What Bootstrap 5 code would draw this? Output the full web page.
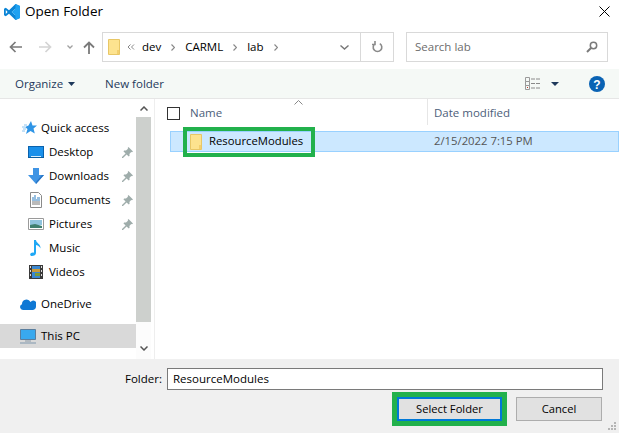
<!DOCTYPE html>
<html lang="en">

<head>
    <meta charset="UTF-8">
    <meta name="viewport" content="width=device-width, initial-scale=1.0">
    <title>Open Folder</title>
    <link href="https://cdn.jsdelivr.net/npm/bootstrap@5.3.5/dist/css/bootstrap.min.css" rel="stylesheet">
    <style>
        html, body { height: 100%; overflow: hidden; }
        body { font-family: "Open Sans", "Noto Sans", sans-serif; font-size: 11.5px; color: #000; background: #fff; }
        svg { display: block; flex: none; }
        .dialog { width: 619px; height: 433px; }
        .title-bar { height: 32px; padding: 0 9px 9px 4px; }
        .title-text { margin-left: 5px; font-size: 13.5px; }
        .tool-bar { height: 37px; padding-left: 9px; padding-bottom: 7px; }
        .nav-btns { width: 93px; padding-right: 7px; }
        .fwd-btn { margin-left: 17px; }
        .hist-btn { margin-left: 15px; }
        .address-box { width: 292px; height: 30px; border: 1px solid #d9d9d9; padding-left: 5px; }
        .crumb { margin-left: 7px; }
        .crumb-sep { margin-left: 10px; }
        .addr-drop { margin-right: 11px; }
        .refresh-cell { width: 33px; height: 100%; border-left: 1px solid #d9d9d9; }
        .search-box { width: 202px; height: 30px; margin-left: 12px; border: 1px solid #d9d9d9; padding: 0 9px 0 8px; color: #6d6d6d; }
        .command-bar { height: 30px; background: #f5f9f6; border-bottom: 1px solid #e6e6e6; color: #1e395b; padding-left: 15px; padding-right: 14px; }
        .org-caret { margin-left: 5px; }
        .new-folder { margin-left: 30px; }
        .view-caret { margin-left: 10px; }
        .help-icon { margin-left: 30px; }
        .main-pane { height: 260px; }
        .side-pane { width: 136px; padding-top: 17px; }
        .side-row { height: 24px; padding-right: 3px; }
        .side-row.lvl-1 { padding-left: 20px; }
        .side-row.lvl-2 { padding-left: 28px; }
        .side-row.gap-top { margin-top: 8px; }
        .side-row.selected { background: #d9d9d9; }
        .side-icon { width: 21px; }
        .star-icon { margin-left: 2px; }
        .scroll-track { width: 15px; margin-right: 3px; background: #fcfcfc; }
        .scroll-btn { height: 18px; background: #fff; }
        .scroll-btn.bottom { height: 37px; background: #fcfcfc; }
        .scroll-thumb { height: 205px; background: #cdd0cd; }
        .list-pane { border-left: 1px solid #eee; }
        .col-head { height: 28px; color: #4c607a; margin-bottom: 4px; }
        .head-check { width: 13px; height: 13px; border: 1px solid #333; margin: 0 10px 0 12px; }
        .name-head { width: 237px; }
        .date-head { height: 26px; border-left: 1px solid #e6e6e6; padding-left: 6px; padding-top: 1px; margin-bottom: 2px; }
        .sort-mark { position: absolute; left: 139px; top: 1px; }
        .file-row { height: 21px; margin-left: 15px; background: #cce8ff; border: 1px solid #99d1ff; }
        .name-cell { width: 263px; padding-left: 19px; }
        .name-text { margin-left: 7px; font-size: 11.3px; }
        .name-mark { position: absolute; left: 12px; top: -5px; width: 132px; height: 30px; border: 4px solid #22b14c; }
        .date-cell { color: #555; font-size: 11.3px; }
        .bottom-pane { background: #f0f0f0; padding: 9px 16px 0 0; position: relative; flex: 1; }
        .folder-label { margin-right: 5px; }
        .folder-input { width: 436px; height: 22px; border: 1px solid #7a7a7a; background: #fff; padding-left: 5px; }
        .btn-row { margin-top: 2px; }
        .dlg-btn { height: 24px; background: #e1e1e1; border: 1px solid #adadad; border-radius: 0; font-size: 11.2px; color: #000; padding: 0; }
        .select-btn { width: 105px; border: 2px solid #0078d7; }
        .select-mark { border: 5px solid #22b14c; }
        .cancel-btn { width: 86px; margin-left: 9px; margin-right: 1px; }
        .grip { position: absolute; right: 2px; bottom: 2px; }
    </style>
</head>

<body>
    <div class="dialog d-flex flex-column">
        <div class="title-bar d-flex align-items-center">
            <svg width="16" height="16" viewBox="0 0 16 16"><path fill="#0a84d6" d="M11.500 0 16 2v12l-4.500 2L5 9.800 1.800 12.300 0 11.300V4.700l1.800-1L5 6.200zM11.500 4.500 7.700 8l3.800 3.500zM1.800 6v4L3.600 8z"/><path fill="#1ea1f1" d="M11.500 0 16 2v12l-4.500 2V11.500L7.700 8l3.800-3.500z"/></svg>
            <span class="title-text">Open Folder</span>
            <svg class="ms-auto" width="11" height="11" viewBox="0 0 11 11"><path stroke="#000" fill="none" d="M.5.500l10 10M10.500.500l-10 10"/></svg>
        </div>

        <div class="tool-bar d-flex align-items-center">
            <div class="nav-btns d-flex align-items-center">
                <svg width="13" height="12" viewBox="0 0 13 12"><path stroke="#7a7a7a" stroke-width="1.700" fill="none" d="M13 6H1.500M6.500 1l-5 5 5 5"/></svg>
                <svg class="fwd-btn" width="13" height="12" viewBox="0 0 13 12"><path stroke="#d4d4d4" stroke-width="1.700" fill="none" d="M0 6h11.500M6.500 1l5 5-5 5"/></svg>
                <svg class="hist-btn" width="6" height="4" viewBox="0 0 6 4"><path stroke="#a0a0a0" stroke-width="1.300" fill="none" d="M.5.500 3 3l2.500-2.500"/></svg>
                <svg class="ms-auto" width="12" height="13" viewBox="0 0 12 13"><path stroke="#7a7a7a" stroke-width="1.800" fill="none" d="M6 13V1.500M1 6.500l5-5 5 5"/></svg>
            </div>
            <div class="address-box d-flex align-items-center">
                <svg width="12" height="16" viewBox="0 0 12 16"><path fill="#fde38f" stroke="#e8c766" d="M.5.500h11v15H.5z"/><path fill="#f3cf6d" d="M9 11h2v4H9z"/></svg>
                <svg class="crumb" width="8" height="6" viewBox="0 0 8 6"><path stroke="#888" fill="none" d="M3.500.500 1 3l2.500 2.500M7 .500 4.500 3 7 5.500"/></svg>
                <span class="crumb">dev</span>
                <svg class="crumb-sep" width="4" height="7" viewBox="0 0 4 7"><path stroke="#888" stroke-width="1.200" fill="none" d="M.5.500l3 3-3 3"/></svg>
                <span class="crumb-sep">CARML</span>
                <svg class="crumb-sep" width="4" height="7" viewBox="0 0 4 7"><path stroke="#888" stroke-width="1.200" fill="none" d="M.5.500l3 3-3 3"/></svg>
                <span class="crumb-sep">lab</span>
                <svg class="crumb-sep" width="4" height="7" viewBox="0 0 4 7"><path stroke="#888" stroke-width="1.200" fill="none" d="M.5.500l3 3-3 3"/></svg>
                <svg class="ms-auto addr-drop" width="9" height="5" viewBox="0 0 9 5"><path stroke="#777" stroke-width="1.400" fill="none" d="M.5.500l4 3.500 4-3.500"/></svg>
                <div class="refresh-cell d-flex align-items-center justify-content-center">
                    <svg width="11" height="12" viewBox="0 0 11 12"><path stroke="#8a8a8a" stroke-width="1.600" fill="none" d="M3.200 2.600a4.300 4.300 0 1 0 4.600 0M3 0v3.500H0"/></svg>
                </div>
            </div>
            <div class="search-box d-flex align-items-center justify-content-between">
                <span>Search lab</span>
                <svg width="12" height="12" viewBox="0 0 12 12"><circle cx="7.500" cy="4.500" r="3.200" stroke="#7a7a7a" stroke-width="1.500" fill="none"/><path stroke="#7a7a7a" stroke-width="2" d="M5 7 1 11"/></svg>
            </div>
        </div>

        <div class="command-bar d-flex align-items-center">
            <span>Organize</span>
            <svg class="org-caret" width="7" height="4" viewBox="0 0 7 4"><path fill="#1e395b" d="M0 0h7L3.500 4z"/></svg>
            <span class="new-folder">New folder</span>
            <svg class="ms-auto" width="16" height="13" viewBox="0 0 16 13"><path fill="none" stroke="#9a9a9a" d="M.5.500h4v4h-4zM.5 4.500h4v4h-4zM.5 8.500h4v4h-4z"/><path stroke="#8a8a8a" d="M6 2h4M11 2h4M6 6.500h4M11 6.500h4M6 11h4M11 11h4"/><path fill="#c0392b" d="M2 10h1v1H2z"/></svg>
            <svg class="view-caret" width="8" height="4" viewBox="0 0 8 4"><path fill="#1e395b" d="M0 0h8L4 4z"/></svg>
            <svg class="help-icon" width="16" height="16" viewBox="0 0 16 16"><circle cx="8" cy="8" r="8" fill="#0a63b4"/><text x="8" y="12.500" text-anchor="middle" font-family="Liberation Sans" font-weight="700" font-size="12" fill="#fff">?</text></svg>
        </div>

        <div class="main-pane d-flex">
            <div class="side-pane">
                <div class="side-row lvl-1 d-flex align-items-center">
                    <div class="side-icon"><svg class="star-icon" width="15" height="14" viewBox="0 0 15 14"><path fill="#2f95e6" d="M9 0l1.500 4.500H15l-3.500 3 1.300 5L8.500 10 4 13l1.500-5L3 6l3.500-1.500z"/><path stroke="#8cc4ef" d="M0 6h3M1 8h3M0 10h3M2 4h3"/></svg></div>
                    <span>Quick access</span>
                </div>
                <div class="side-row lvl-2 d-flex align-items-center">
                    <div class="side-icon"><svg width="16" height="12" viewBox="0 0 16 12"><path fill="#1a90ea" d="M0 0h16v12H0z"/><path fill="#0a62ad" d="M0 0h16v1H0zM0 0h1v12H0zM15 0h1v12h-1z"/><path fill="#0b5d9e" d="M0 11h16v1H0z"/><path fill="#d8eefc" d="M3 10h10v1H3z"/></svg></div>
                    <span>Desktop</span>
                    <svg class="ms-auto" width="11" height="11" viewBox="0 0 11 11"><path fill="#9fadab" d="M6.500 0 11 4.500l-1 .8-.8-.3L7.400 7l.2 1.800-.8.8L4.600 7.400 1 11l-1 0 0-1L3.600 6.400 1.400 4.200l.8-.8L4 3.600 6 1.800 5.700 1z"/></svg>
                </div>
                <div class="side-row lvl-2 d-flex align-items-center">
                    <div class="side-icon"><svg width="16" height="16" viewBox="0 0 16 16"><path fill="#3f94e4" d="M5 0h6v7h5l-8 9-8-9h5z"/><path fill="#2a75c4" d="M8 16l8-9h-2l-6 7z"/></svg></div>
                    <span>Downloads</span>
                    <svg class="ms-auto" width="11" height="11" viewBox="0 0 11 11"><path fill="#9fadab" d="M6.500 0 11 4.500l-1 .8-.8-.3L7.400 7l.2 1.800-.8.8L4.600 7.400 1 11l-1 0 0-1L3.600 6.400 1.400 4.200l.8-.8L4 3.600 6 1.800 5.700 1z"/></svg>
                </div>
                <div class="side-row lvl-2 d-flex align-items-center">
                    <div class="side-icon"><svg width="16" height="16" viewBox="0 0 16 16"><path fill="#fff" stroke="#8a8a8a" d="M2.500.500h8l3 3v12h-11z"/><path stroke="#2f7fc1" d="M6 4h2M4 6h4M9 6h3M4 8h8"/><path stroke="#777" d="M4 10h8M4 12h8"/></svg></div>
                    <span>Documents</span>
                    <svg class="ms-auto" width="11" height="11" viewBox="0 0 11 11"><path fill="#9fadab" d="M6.500 0 11 4.500l-1 .8-.8-.3L7.400 7l.2 1.800-.8.8L4.600 7.400 1 11l-1 0 0-1L3.600 6.400 1.400 4.200l.8-.8L4 3.600 6 1.800 5.700 1z"/></svg>
                </div>
                <div class="side-row lvl-2 d-flex align-items-center">
                    <div class="side-icon"><svg width="16" height="12" viewBox="0 0 16 12"><path fill="#fff" stroke="#9a9a9a" d="M.5.500h15v11H.5z"/><path fill="#8fc3dd" d="M2 2h12v5H2z"/><path fill="#3f7f6f" d="M2 10V7l5-1 7 2v2z"/></svg></div>
                    <span>Pictures</span>
                    <svg class="ms-auto" width="11" height="11" viewBox="0 0 11 11"><path fill="#9fadab" d="M6.500 0 11 4.500l-1 .8-.8-.3L7.400 7l.2 1.800-.8.8L4.600 7.400 1 11l-1 0 0-1L3.600 6.400 1.400 4.200l.8-.8L4 3.600 6 1.800 5.700 1z"/></svg>
                </div>
                <div class="side-row lvl-2 d-flex align-items-center">
                    <div class="side-icon"><svg width="16" height="16" viewBox="0 0 16 16"><path fill="#1fa8f5" d="M6 0h2c0 3 5 4 4.500 8.500C12 7 10.500 5.500 8 5v8c0 2-2 3-4 3s-2.500-2-1-3c1-.6 2-.7 3-.3z"/></svg></div>
                    <span>Music</span>
                </div>
                <div class="side-row lvl-2 d-flex align-items-center">
                    <div class="side-icon"><svg width="16" height="16" viewBox="0 0 16 16"><path fill="#3a3a3a" d="M1 1h14v14H1z"/><path fill="#3a87d0" d="M4 2h8v12H4z"/><path fill="#c99a3a" d="M4 5h8v3H4z"/><path fill="#7a9a3a" d="M7 9h5v3H7z"/><path fill="#ddd" d="M2 2h1v2H2zM2 6h1v2H2zM2 10h1v2H2zM13 2h1v2h-1zM13 6h1v2h-1zM13 10h1v2h-1z"/></svg></div>
                    <span>Videos</span>
                </div>
                <div class="side-row lvl-1 gap-top d-flex align-items-center">
                    <div class="side-icon"><svg width="16" height="11" viewBox="0 0 16 11"><path fill="#0f78d4" d="M3 11a3 3 0 0 1-1-5.800A4.500 4.500 0 0 1 10.500 3 3.500 3.500 0 0 1 16 7.500 3.500 3.500 0 0 1 13 11z"/></svg></div>
                    <span>OneDrive</span>
                </div>
                <div class="side-row selected lvl-1 gap-top d-flex align-items-center">
                    <div class="side-icon"><svg width="16" height="15" viewBox="0 0 16 15"><path fill="#39a9ee" stroke="#5a7e9e" d="M.5.500h15v10H.5z"/><path stroke="#8a9aa8" d="M5 12h6"/><path stroke="#7f97ad" d="M0 14h16"/></svg></div>
                    <span>This PC</span>
                </div>
            </div>

            <div class="scroll-track d-flex flex-column">
                <div class="scroll-btn d-flex align-items-center justify-content-center">
                    <svg width="8" height="5" viewBox="0 0 8 5"><path stroke="#555" stroke-width="1.500" fill="none" d="M.5 4.500 4 1l3.500 3.500"/></svg>
                </div>
                <div class="scroll-thumb"></div>
                <div class="scroll-btn bottom d-flex align-items-end justify-content-center pb-2">
                    <svg width="8" height="5" viewBox="0 0 8 5"><path stroke="#555" stroke-width="1.500" fill="none" d="M.5.500 4 4 7.500.500"/></svg>
                </div>
            </div>

            <div class="list-pane flex-grow-1">
                <div class="col-head d-flex align-items-center position-relative">
                    <div class="head-check"></div>
                    <div class="name-head">Name</div>
                    <div class="date-head d-flex align-items-center">Date modified</div>
                    <svg class="sort-mark" width="9" height="5" viewBox="0 0 9 5"><path stroke="#888" fill="none" d="M.5 4.500l4-4 4 4"/></svg>
                </div>
                <div class="file-row d-flex align-items-center position-relative">
                    <div class="name-cell d-flex align-items-center">
                        <svg width="12" height="16" viewBox="0 0 12 16"><path fill="#fde38f" stroke="#e8c766" d="M.5.500h11v15H.5z"/><path fill="#f3cf6d" d="M9 11h2v4H9z"/></svg>
                        <span class="name-text">ResourceModules</span>
                    </div>
                    <div class="date-cell">2/15/2022 7:15 PM</div>
                    <div class="name-mark"></div>
                </div>
            </div>
        </div>

        <div class="bottom-pane">
            <div class="d-flex align-items-center justify-content-end">
                <span class="folder-label">Folder:</span>
                <div class="folder-input d-flex align-items-center">ResourceModules</div>
            </div>
            <div class="btn-row d-flex justify-content-end align-items-center">
                <div class="select-mark"><button type="button" class="btn dlg-btn select-btn d-block">Select Folder</button></div>
                <button type="button" class="btn dlg-btn cancel-btn">Cancel</button>
            </div>
            <svg class="grip" width="9" height="9" viewBox="0 0 9 9"><path fill="#b5b5b5" d="M6 0h2v2H6zM3 3h2v2H3zM6 3h2v2H6zM0 6h2v2H0zM3 6h2v2H3zM6 6h2v2H6z"/></svg>
        </div>
    </div>

    <script src="https://cdn.jsdelivr.net/npm/bootstrap@5.3.5/dist/js/bootstrap.bundle.min.js"></script>
</body>

</html>
